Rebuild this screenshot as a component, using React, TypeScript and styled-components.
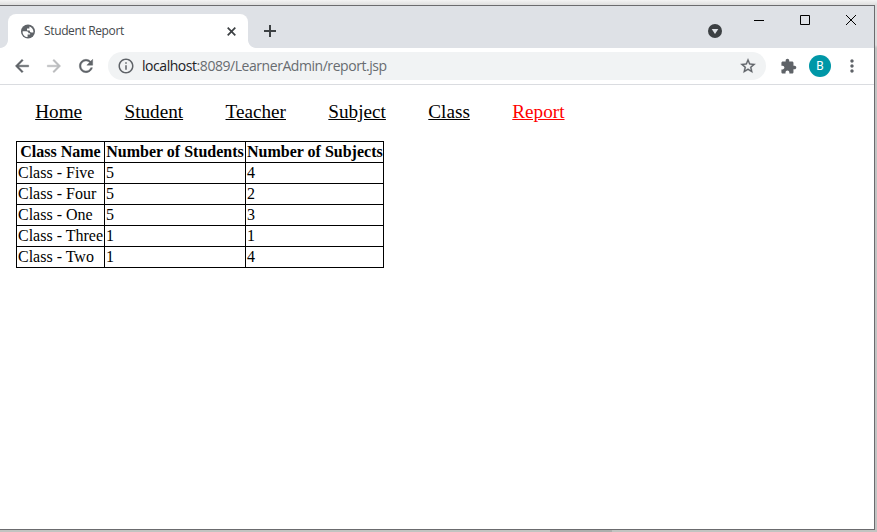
import React from 'react';
import styled, { createGlobalStyle } from 'styled-components';

const GlobalStyle = createGlobalStyle`
  * { box-sizing: border-box; }
  html, body { margin: 0; padding: 0; overflow: hidden; }
`;

const Desktop = styled.div`
  width: 877px;
  height: 532px;
  padding-top: 5px;
  display: flex;
  flex-direction: column;
  background: linear-gradient(#f4f4f4, #dedede 5px, #dedede 45px, #c2c4c3 48px, #c2c4c3);
`;

const Window = styled.div`
  width: 875px;
  height: 525px;
  display: flex;
  flex-direction: column;
  background: #fff;
  border: 1px solid #6b6b6e;
  border-left: 0;
`;

const BottomEdge = styled.div`
  height: 2px;
  padding-left: 550px;
  background: #c2c4c1;
`;

const EdgeShade = styled.div`
  width: 62px;
  height: 2px;
  background: #adafad;
`;

const TitleBar = styled.div`
  height: 42px;
  flex: none;
  display: flex;
  align-items: flex-end;
  background: #dee1e6;
`;

const TabFoot = styled.div<{ $side: 'left' | 'right' }>`
  width: 8px;
  height: 8px;
  background: radial-gradient(circle at ${p => (p.$side === 'left' ? '0 0' : '8px 0')}, transparent 7.5px, #fff 8.3px);
`;

const Tab = styled.div`
  width: 240px;
  height: 34px;
  padding: 0 10px 0 13px;
  display: flex;
  align-items: center;
  background: #fff;
  border-radius: 8px 8px 0 0;
`;

const TabTitle = styled.span`
  width: 81px;
  margin: 0 102px 0 8px;
  font: 12px/16px 'Open Sans', sans-serif;
  letter-spacing: -0.36px;
  white-space: nowrap;
  color: #45494d;
`;

const NewTab = styled.div`
  width: 28px;
  height: 34px;
  display: flex;
  align-items: center;
  justify-content: center;
`;

const WindowControls = styled.div`
  align-self: flex-start;
  margin-left: auto;
  display: flex;
`;

const SearchTabs = styled.div`
  width: 42px;
  height: 42px;
  padding: 18px 14px 0 14px;
`;

const Control = styled.div`
  width: 46px;
  height: 28px;
  display: flex;
  align-items: center;
  justify-content: center;
`;

const Toolbar = styled.div`
  height: 37px;
  flex: none;
  display: flex;
  align-items: center;
  padding-left: 12px;
  background: #fff;
  border-bottom: 1px solid #dadce0;
`;

const ToolButton = styled.div`
  width: 20px;
  height: 20px;
  flex: none;
  margin-right: 12px;
`;

const Extensions = styled.div`
  width: 17px;
  height: 17px;
  margin: 0 12px 0 14px;
`;

const AddressBar = styled.div`
  width: 658px;
  height: 28px;
  padding: 0 9px 0 9px;
  display: flex;
  align-items: center;
  background: #f1f3f4;
  border-radius: 14px;
`;

const Url = styled.span`
  flex: 1;
  margin-left: 7px;
  font: 14px/20px 'Open Sans', sans-serif;
  letter-spacing: -0.45px;
  white-space: nowrap;
  color: #686c70;
`;

const Host = styled.span`
  color: #202124;
`;

const Avatar = styled.div`
  width: 22px;
  height: 22px;
  margin: 0 11px 0 0;
  border-radius: 50%;
  background: #0097a7;
  color: #fff;
  text-align: center;
  font: 12px/22px Roboto, sans-serif;
`;

const Page = styled.main`
  flex: 1;
  font-family: 'Liberation Serif', serif;
  color: #000;
`;

const Nav = styled.nav`
  display: flex;
  gap: 42.4px;
  padding: 16px 0 0 35.2px;
  font-size: 19.2px;
  line-height: 22px;
`;

const NavLink = styled.a<{ $active?: boolean }>`
  color: ${p => (p.$active ? '#f00' : '#000')};
  text-decoration: underline;
`;

const Table = styled.table`
  width: 368px;
  margin: 18px 0 0 16px;
  border-collapse: collapse;
  table-layout: fixed;
  font-size: 16px;
  line-height: 18px;
`;

const Col = styled.col<{ $w: number }>`
  width: ${p => p.$w}px;
`;

const Row = styled.tr`
  height: 21px;
`;

const HeadCell = styled.th`
  padding: 1px;
  border: 1px solid #000;
  white-space: nowrap;
`;

const Cell = styled.td`
  padding: 1px;
  border: 1px solid #000;
  white-space: nowrap;
`;

const Svg = styled.svg`
  display: block;
  flex: none;
`;

const material = {
  back: 'M20 11H7.830l5.590-5.590L12 4l-8 8 8 8 1.410-1.410L7.830 13H20v-2z',
  forward: 'M12 4l-1.410 1.410L16.170 11H4v2h12.170l-5.580 5.590L12 20l8-8z',
  reload: 'M17.650 6.350C16.200 4.900 14.210 4 12 4c-4.420 0-7.990 3.580-7.990 8s3.570 8 7.990 8c3.730 0 6.840-2.550 7.730-6h-2.080c-.82 2.330-3.040 4-5.650 4-3.310 0-6-2.690-6-6s2.690-6 6-6c1.660 0 3.140.69 4.220 1.780L13 11h7V4l-2.350 2.350z',
  info: 'M11 7h2v2h-2zm0 4h2v6h-2zm1-9C6.480 2 2 6.480 2 12s4.480 10 10 10 10-4.480 10-10S17.520 2 12 2zm0 18c-4.410 0-8-3.590-8-8s3.590-8 8-8 8 3.590 8 8-3.590 8-8 8z',
  star: 'M22 9.240l-7.190-.62L12 2 9.190 8.630 2 9.240l5.460 4.730L5.820 21 12 17.270 18.180 21l-1.630-7.030L22 9.240zM12 15.400l-3.760 2.270 1-4.280-3.320-2.880 4.380-.38L12 6.100l1.710 4.040 4.380.38-3.320 2.880 1 4.280L12 15.400z',
  puzzle: 'M20.500 11H19V7c0-1.100-.9-2-2-2h-4V3.500C13 2.120 11.880 1 10.500 1S8 2.120 8 3.500V5H4c-1.100 0-1.990.9-1.990 2v3.800H3.500c1.490 0 2.700 1.210 2.700 2.700s-1.210 2.700-2.700 2.700H2V20c0 1.100.9 2 2 2h3.800v-1.500c0-1.490 1.210-2.700 2.700-2.700 1.490 0 2.700 1.210 2.700 2.700V22H17c1.100 0 2-.9 2-2v-4h1.500c1.380 0 2.500-1.120 2.500-2.500S21.880 11 20.500 11z',
  more: 'M12 8c1.100 0 2-.9 2-2s-.9-2-2-2-2 .9-2 2 .9 2 2 2zm0 2c-1.100 0-2 .9-2 2s.9 2 2 2 2-.9 2-2-.9-2-2-2zm0 6c-1.100 0-2 .9-2 2s.9 2 2 2 2-.9 2-2-.9-2-2-2z',
};

const Icon = ({ name, size = 20, color = '#5f6368', stroke = 0 }: { name: keyof typeof material; size?: number; color?: string; stroke?: number }) => (
  <Svg width={size} height={size} viewBox="0 0 24 24" fill={color} stroke={color} strokeWidth={stroke}>
    <path d={material[name]} />
  </Svg>
);

const links = ['Home', 'Student', 'Teacher', 'Subject', 'Class', 'Report'];

const classes: [string, number, number][] = [
  ['Class - Five', 5, 4],
  ['Class - Four', 5, 2],
  ['Class - One', 5, 3],
  ['Class - Three', 1, 1],
  ['Class - Two', 1, 4],
];

export default function App() {
  return (
    <Desktop>
      <GlobalStyle />
      <Window>
        <TitleBar>
          <TabFoot $side="left" />
          <Tab>
            <Svg width="15" height="15" viewBox="0 0 15 15">
              <circle cx="7" cy="7.500" r="7" fill="#5f6368" />
              <path d="M1.700 7.300h3.600c1.500 0 2.200.7 2.200 1.900h1.600v1.200H6.600v2.700C3.800 12.900 1.600 10.600 1.600 7.900zM8.400 2.400c2.300.7 4 2.700 4 5.100l-.1.900h-1.900c-1.200 0-1.700-.6-1.700-1.900H6V4.400h2.400z" fill="#fff" />
            </Svg>
            <TabTitle>Student Report</TabTitle>
            <Svg width="9" height="9" viewBox="0 0 9 9" stroke="#3c4043" strokeWidth="1.700">
              <path d="M.7.7l7.600 7.600M8.300.7L.7 8.300" />
            </Svg>
          </Tab>
          <TabFoot $side="right" />
          <NewTab>
            <Svg width="12" height="12" viewBox="0 0 12 12" fill="#3c4043">
              <path d="M5 0h2v5h5v2H7v5H5V7H0V5h5z" />
            </Svg>
          </NewTab>
          <WindowControls>
            <SearchTabs>
              <Svg width="14" height="14" viewBox="0 0 14 14">
                <circle cx="7" cy="7" r="7" fill="#3c4043" />
                <path d="M3.700 5h6.600L7 10z" fill="#dee1e6" />
              </Svg>
            </SearchTabs>
            <Control>
              <Svg width="10" height="10" stroke="#000"><path d="M0 5.500h10" /></Svg>
            </Control>
            <Control>
              <Svg width="10" height="10" fill="none" stroke="#000"><path d="M.5.5h9v9h-9z" /></Svg>
            </Control>
            <Control>
              <Svg width="10" height="10" stroke="#000"><path d="M0 0l10 10M10 0L0 10" /></Svg>
            </Control>
          </WindowControls>
        </TitleBar>
        <Toolbar>
          <ToolButton><Icon name="back" stroke={0.5} /></ToolButton>
          <ToolButton><Icon name="forward" color="#babcbe" stroke={0.5} /></ToolButton>
          <ToolButton><Icon name="reload" stroke={0.5} /></ToolButton>
          <AddressBar>
            <Icon name="info" size={18} />
            <Url><Host>localhost</Host>:8089/LearnerAdmin/report.jsp</Url>
            <Icon name="star" size={18} stroke={0.4} />
          </AddressBar>
          <Extensions><Icon name="puzzle" size={17} /></Extensions>
          <Avatar>B</Avatar>
          <Icon name="more" />
        </Toolbar>
        <Page>
          <Nav>
            {links.map(label => (
              <NavLink key={label} $active={label === 'Report'}>{label}</NavLink>
            ))}
          </Nav>
          <Table>
            <colgroup><Col $w={88} /><Col $w={141} /><Col $w={138} /></colgroup>
            <thead>
              <Row>
                <HeadCell>Class Name</HeadCell>
                <HeadCell>Number of Students</HeadCell>
                <HeadCell>Number of Subjects</HeadCell>
              </Row>
            </thead>
            <tbody>
              {classes.map(([name, students, subjects]) => (
                <Row key={name}>
                  <Cell>{name}</Cell>
                  <Cell>{students}</Cell>
                  <Cell>{subjects}</Cell>
                </Row>
              ))}
            </tbody>
          </Table>
        </Page>
      </Window>
      <BottomEdge><EdgeShade /></BottomEdge>
    </Desktop>
  );
}
